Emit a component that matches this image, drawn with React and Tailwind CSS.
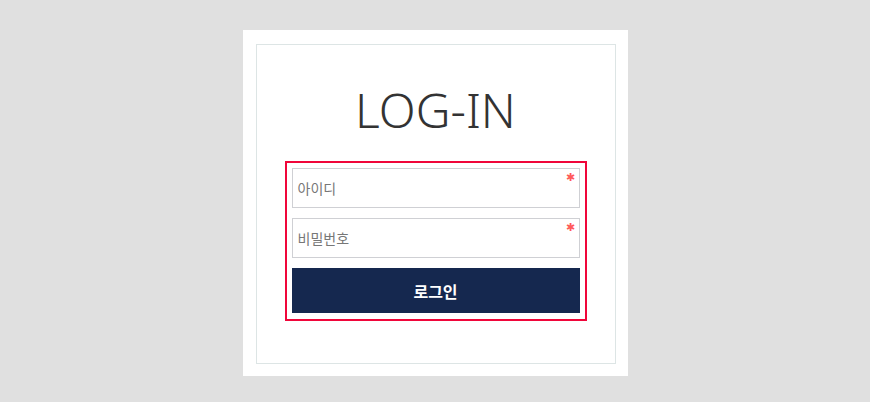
export default function App() {
  return (
    <div className="min-h-[402px] w-full bg-[#e0e0e0] pt-[30px]" style={{ fontFamily: '"Noto Sans", "Noto Sans CJK KR", sans-serif' }}>
      <div className="mx-auto w-[385px] h-[346px] bg-white pt-[14px] pl-[13px] pr-[12px]">
        <div className="h-[320px] border border-[#dde5e5] px-[28px] pt-[35px]">
          <h1 className="text-center text-[48px] leading-[60px] font-light text-[#333]" style={{ fontFamily: '"Noto Sans", sans-serif' }}>LOG-IN</h1>
          <div className="mt-[21px] border-2 border-[#f0063a] p-[5px] pb-[6px] flex flex-col gap-[10px]">
            <div className="relative h-[40px] border border-[#cfd0d4] flex items-center pl-[5px]">
              <span className="text-[14px] text-[#777] mt-[1px]" style={{ fontFamily: '"Noto Sans CJK KR", sans-serif' }}>아이디</span>
              <span className="absolute right-[4px] top-[2px] text-[#ff5a5a] text-[11px] leading-none">✱</span>
            </div>
            <div className="relative h-[40px] border border-[#cfd0d4] flex items-center pl-[5px]">
              <span className="text-[14px] text-[#777] mt-[1px]" style={{ fontFamily: '"Noto Sans CJK KR", sans-serif' }}>비밀번호</span>
              <span className="absolute right-[4px] top-[2px] text-[#ff5a5a] text-[11px] leading-none">✱</span>
            </div>
            <button className="h-[45px] bg-[#15284f] text-white text-[16px] font-bold" style={{ fontFamily: '"Noto Sans CJK KR", sans-serif' }}>로그인</button>
          </div>
        </div>
      </div>
    </div>
  );
}
